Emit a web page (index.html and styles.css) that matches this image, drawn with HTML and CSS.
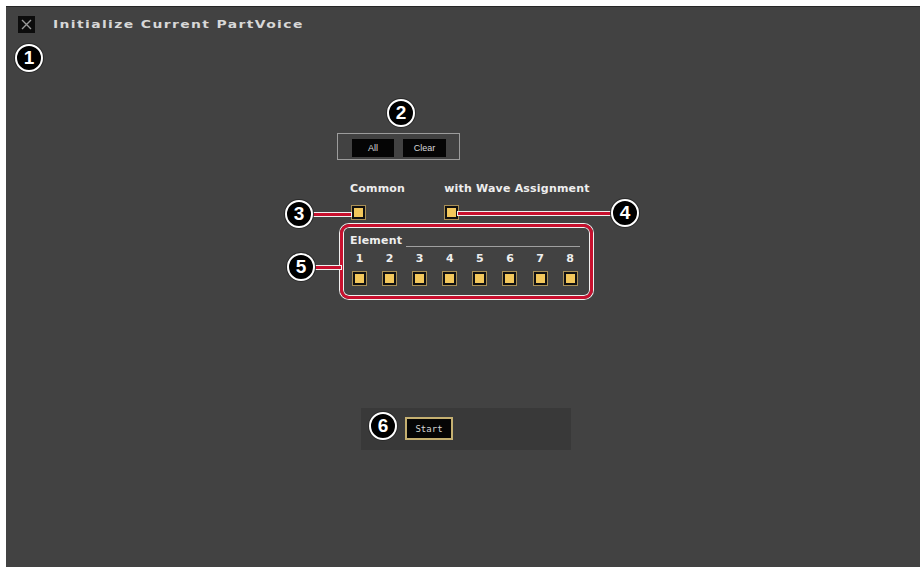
FILE: index.html
```html
<!DOCTYPE html>
<html>
<head>
<meta charset="utf-8">
<link rel="stylesheet" href="styles.css">
</head>
<body>
<div class="panel">
  <div class="header">
    <div class="close-icon">
      <svg width="17" height="17" viewBox="0 0 17 17"><path d="M4 4 L13 13 M13 4 L4 13" stroke="#9a9a9a" stroke-width="1.4" fill="none"/></svg>
    </div>
    <div class="title">Initialize Current PartVoice</div>
  </div>

  <div class="group-box">
    <div class="btn">All</div>
    <div class="btn btn-clear">Clear</div>
  </div>

  <div class="options">
    <div class="opt opt-common">
      <div class="label">Common</div>
      <div class="check"></div>
    </div>
    <div class="opt opt-wave">
      <div class="label">with Wave Assignment</div>
      <div class="check"></div>
    </div>
  </div>

  <div class="element-group">
    <div class="element-head">
      <span class="label">Element</span>
      <span class="rule"></span>
    </div>
    <div class="element-grid">
      <div class="el"><span class="num">1</span><div class="check"></div></div>
      <div class="el"><span class="num">2</span><div class="check"></div></div>
      <div class="el"><span class="num">3</span><div class="check"></div></div>
      <div class="el"><span class="num">4</span><div class="check"></div></div>
      <div class="el"><span class="num">5</span><div class="check"></div></div>
      <div class="el"><span class="num">6</span><div class="check"></div></div>
      <div class="el"><span class="num">7</span><div class="check"></div></div>
      <div class="el"><span class="num">8</span><div class="check"></div></div>
    </div>
  </div>

  <div class="start-bar">
    <div class="start-btn">Start</div>
  </div>

  <!-- annotation callouts -->
  <div class="callout-frame"></div>
  <div class="red-line line-3"></div>
  <div class="red-line line-4"></div>
  <div class="red-line line-5"></div>
  <div class="badge b1">1</div>
  <div class="badge b2">2</div>
  <div class="badge b3">3</div>
  <div class="badge b4">4</div>
  <div class="badge b5">5</div>
  <div class="badge b6">6</div>
</div>
</body>
</html>
```

FILE: styles.css
```css
html, body {
  margin: 0;
  padding: 0;
  background: #ffffff;
}

body {
  width: 923px;
  height: 570px;
  overflow: hidden;
  font-family: "DejaVu Sans", "Liberation Sans", sans-serif;
}

.panel {
  position: relative;
  margin: 6px 0 0 6px;
  width: 914px;
  height: 561px;
  background: #424242;
  border-top: 1px solid #262626;
  box-sizing: border-box;
  display: flex;
  flex-direction: column;
  align-items: flex-start;
}

.header {
  display: flex;
  align-items: center;
  gap: 18px;
  padding: 9px 0 0 12px;
  height: 17px;
}

.close-icon {
  width: 17px;
  height: 17px;
  background: #0c0c0c;
  display: flex;
}

.title {
  color: #d8d8d8;
  font-family: "DejaVu Sans", sans-serif;
  font-size: 10px;
  font-weight: bold;
  letter-spacing: 1px;
  transform: scaleX(1.39);
  transform-origin: left center;
  white-space: nowrap;
}

.group-box {
  margin: 100px 0 0 331px;
  width: 123px;
  height: 27px;
  box-sizing: border-box;
  border: 1px solid #9c9c9c;
  display: flex;
  gap: 9px;
  padding: 5px 0 0 14px;
}

.btn {
  width: 42px;
  height: 18px;
  background: #050505;
  color: #d8d8d8;
  font-family: "Liberation Sans", sans-serif;
  font-size: 9px;
  display: flex;
  align-items: center;
  justify-content: center;
}

.btn-clear {
  width: 43px;
}

.options {
  margin: 22px 0 0 344px;
  display: flex;
  gap: 39px;
}

.opt {
  display: flex;
  flex-direction: column;
  align-items: flex-start;
  gap: 9px;
}

.opt .check {
  margin-left: 1px;
}

.opt-wave .check {
  margin-left: 0;
}

.label {
  color: #eeeeee;
  font-family: "DejaVu Sans", sans-serif;
  font-weight: bold;
  font-size: 11px;
  line-height: 14px;
  letter-spacing: 0.2px;
}

.check {
  width: 15px;
  height: 15px;
  box-sizing: border-box;
  border: 1px solid #a88f56;
  background: #f3c75b;
  box-shadow: inset 0 0 0 2px #111111;
}

.element-group {
  position: relative;
  margin: 14px 0 0 344px;
  width: 230px;
}

.element-head {
  display: flex;
  align-items: center;
  gap: 4px;
  height: 14px;
}

.element-head .rule {
  flex: 1;
  height: 1px;
  background: #a0a0a0;
  margin-top: 10px;
}

.element-grid {
  display: grid;
  grid-template-columns: repeat(8, 15px);
  column-gap: 15.1px;
  margin: 4px 0 0 2px;
}

.el {
  display: flex;
  flex-direction: column;
  align-items: center;
  gap: 6px;
}

.num {
  color: #eeeeee;
  font-weight: bold;
  font-size: 11px;
  line-height: 13px;
}

.start-bar {
  margin: 122px 0 0 355px;
  width: 210px;
  height: 42px;
  background: #393939;
  display: flex;
  align-items: flex-start;
  padding: 9px 0 0 44px;
  box-sizing: border-box;
}

.start-btn {
  width: 48px;
  height: 23px;
  box-sizing: border-box;
  border: 2px solid #c5b071;
  background: #050505;
  color: #d6d6d6;
  font-family: "DejaVu Sans Mono", monospace;
  font-size: 9px;
  display: flex;
  align-items: center;
  justify-content: center;
}

/* ---- annotation callouts (overlay) ---- */
.badge {
  position: absolute;
  width: 28px;
  height: 28px;
  box-sizing: border-box;
  border-radius: 50%;
  background: #000;
  border: 2px solid #fff;
  box-shadow: 0 0 0 1px #2a2a2a;
  color: #fff;
  font-family: "Liberation Sans", Arial, sans-serif;
  font-weight: bold;
  font-size: 19px;
  display: flex;
  align-items: center;
  justify-content: center;
  z-index: 3;
}

.b1 { left: 9px;   top: 37px; }
.b2 { left: 381px; top: 92px; }
.b3 { left: 279px; top: 193px; }
.b4 { left: 605px; top: 192px; }
.b5 { left: 281px; top: 246px; }
.b6 { left: 363px; top: 405px; }

.red-line {
  position: absolute;
  height: 3px;
  background: #c8102e;
  box-shadow: 0 0 0 1px #f0f0f0;
  z-index: 2;
}

.line-3 { left: 305px; top: 206px; width: 40px; }
.line-4 { left: 452px; top: 205px; width: 160px; }
.line-5 { left: 305px; top: 259px; width: 30px; }

.callout-frame {
  position: absolute;
  left: 334px;
  top: 217px;
  width: 253px;
  height: 75px;
  box-sizing: border-box;
  border: 3px solid #c8102e;
  border-radius: 9px;
  box-shadow: 0 0 0 1px #f0f0f0, inset 0 0 0 1px #f0f0f0;
  z-index: 2;
}
```
